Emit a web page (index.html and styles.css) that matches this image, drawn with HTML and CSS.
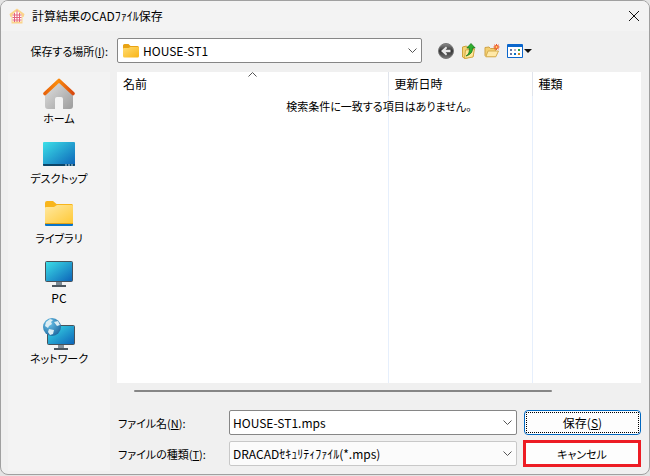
FILE: index.html
```html
<!DOCTYPE html>
<html lang="ja">
<head>
  <meta charset="UTF-8">
  <meta name="viewport" content="width=device-width, initial-scale=1.0">
  <title>計算結果のCADﾌｧｲﾙ保存</title>
  <link rel="stylesheet" href="styles.css">
</head>
<body>
  <svg width="0" height="0" class="defs" aria-hidden="true">
    <defs>
      <linearGradient id="folder" x1="0" y1="0" x2="1" y2="1"><stop offset="0" stop-color="#ffe9a2"/><stop offset="1" stop-color="#ffc937"/></linearGradient>
      <linearGradient id="folderGold" x1="0" y1="0" x2="1" y2="1"><stop offset="0" stop-color="#ffdc72"/><stop offset="1" stop-color="#f9b415"/></linearGradient>
      <linearGradient id="screen" x1="0" y1="0" x2="1" y2="1"><stop offset="0" stop-color="#3ce0e8"/><stop offset="1" stop-color="#0c62b8"/></linearGradient>
      <linearGradient id="wall" x1="0" y1="0" x2="1" y2="1"><stop offset="0" stop-color="#e4e4e4"/><stop offset="1" stop-color="#9c9c9c"/></linearGradient>
      <linearGradient id="roof" x1="0" y1="0" x2="1" y2="0"><stop offset="0" stop-color="#e8640c"/><stop offset="0.45" stop-color="#fb8c0c"/><stop offset="1" stop-color="#d84a10"/></linearGradient>
      <radialGradient id="globe" cx="0.35" cy="0.3" r="0.8"><stop offset="0" stop-color="#6cc4ea"/><stop offset="1" stop-color="#1b649c"/></radialGradient>
      <linearGradient id="ball" x1="0" y1="0" x2="0" y2="1"><stop offset="0" stop-color="#8c8c8c"/><stop offset="0.5" stop-color="#333"/><stop offset="1" stop-color="#777"/></linearGradient>
    </defs>
  </svg>

  <div class="dialog">
    <header class="titlebar">
      <svg class="app-icon" width="16" height="16" viewBox="0 0 16 16">
        <path d="M8 0.5 L15.5 6 L14.6 9 L13.5 8.8 V15.5 H2.5 V8.8 L1.4 9 L0.5 6 Z" fill="#fbd48c"/>
        <path d="M8 3 L12.5 6.5 V13.5 H3.5 V6.5 Z" fill="#fff"/>
        <path d="M8 2.5 V14 M5.5 5 V14 M10.5 5 V14 M3.5 7 H12.5 M3.5 9.5 H12.5 M3.5 12 H12.5" stroke="#e4647c" fill="none"/>
      </svg>
      <h1>計算結果のCADﾌｧｲﾙ保存</h1>
      <button class="close" type="button" aria-label="閉じる">
        <svg width="10" height="10" viewBox="0 0 10 10"><path d="M0 0 L10 10 M10 0 L0 10" stroke="#111" fill="none"/></svg>
      </button>
    </header>

    <form class="content">
      <div class="location">
        <label for="folder-select">保存する場所(<u>I</u>):</label>
        <div class="combo combo-folder">
          <svg width="16" height="14" viewBox="0 0 16 14">
            <path d="M0 1.5 Q0 0 1.5 0 H5.5 L7.5 2 H14.5 Q16 2 16 3.5 V6 H0 Z" fill="#e9a313"/>
            <path d="M0 5 Q0 4 1 4 H5.5 L7.5 3 H15 Q16 3 16 4 V12 Q16 13.5 14.5 13.5 H1.5 Q0 13.5 0 12 Z" fill="url(#folderGold)"/>
          </svg>
          <select id="folder-select"><option>HOUSE-ST1</option></select>
          <svg class="chevron" width="9" height="6" viewBox="0 0 9 6"><path d="M0.5 0.5 L4.5 4.5 L8.5 0.5" stroke="#555" fill="none"/></svg>
        </div>
        <div class="tools">
          <button type="button" aria-label="戻る">
            <svg width="16" height="16" viewBox="0 0 16 16">
              <circle cx="8" cy="8" r="7.5" fill="url(#ball)" stroke="#777"/>
              <path d="M3 8 L8 3.5 L9.2 5 L7.6 6.8 H12.5 V9.2 H7.6 L9.2 11 L8 12.5 Z" fill="#e8e8e8"/>
            </svg>
          </button>
          <button type="button" aria-label="上へ">
            <svg width="16" height="16" viewBox="0 0 16 16">
              <path d="M1.5 4 L5.5 3 L7 4.5 L12.5 4 V13 L4 15.5 L1.5 14 Z" fill="#f5d375" stroke="#cfa23c"/>
              <path d="M4.5 7 L13.5 6 L12 14 L3.5 15.5 Z" fill="#ffe79a" stroke="#d2a843"/>
              <path d="M5 13 Q9 11 8.3 5 H5.8 L10 0.5 L14.2 5 H11.5 Q12 11 5 13 Z" fill="#2fb02f" stroke="#127018" stroke-width="0.7"/>
            </svg>
          </button>
          <button type="button" aria-label="新しいフォルダー">
            <svg width="16" height="16" viewBox="0 0 16 16">
              <path d="M1 4.5 L5 4 L6.5 5.5 H11.5 V13.5 H2 L1 12.5 Z" fill="#f3cf70" stroke="#d0a345"/>
              <path d="M4 8 H14.5 L11.8 13.8 H1.8 Z" fill="#ffe9a8" stroke="#d6ad4e"/>
              <path d="M12.5 1 V7 M9.5 4 H15.5 M10.2 1.8 L14.8 6.2 M14.8 1.8 L10.2 6.2" stroke="#ee5528" fill="none"/>
              <circle cx="12.5" cy="4" r="1.6" fill="#ffd26a" stroke="#ee5528"/>
            </svg>
          </button>
          <button type="button" aria-label="表示">
            <svg width="25" height="14" viewBox="0 0 25 14">
              <rect width="16" height="14" rx="1" fill="#0a66cc"/>
              <rect x="1" y="3" width="14" height="10" fill="#fff"/>
              <path d="M3 5h2v2h-2z M3 9h2v2h-2z" fill="#6078a8"/>
              <path d="M7 5h2v2h-2z" fill="#b8a8c0"/><path d="M7 9h2v2h-2z" fill="#0870c8"/>
              <path d="M11 5h2v2h-2z" fill="#28a048"/><path d="M11 9h2v2h-2z" fill="#c88828"/>
              <path d="M17 5 H25 L21 9 Z" fill="#111"/>
            </svg>
          </button>
        </div>
      </div>

      <nav class="places">
        <a href="#home">
          <svg width="32" height="32" viewBox="0 0 32 32">
            <path d="M2 14 L16 2 L30 14 V28 Q30 31 27 31 H20 V21 Q20 19 18 19 H14 Q12 19 12 21 V31 H5 Q2 31 2 28 Z" fill="url(#wall)"/>
            <path d="M2 15.5 L16 2.5 L30 15.5" stroke="url(#roof)" stroke-width="3.6" stroke-linecap="round" stroke-linejoin="round" fill="none"/>
          </svg>
          ホーム
        </a>
        <a href="#desktop">
          <svg width="32" height="32" viewBox="0 0 32 32">
            <rect y="4" width="32" height="24" rx="1" fill="url(#screen)"/>
            <path d="M0 26 H32 V27 Q32 28 31 28 H1 Q0 28 0 27 Z" fill="#0b4568"/>
            <path d="M22 27 h2 M25 27 h2 M28 27 h2" stroke="#c8e4ef"/>
          </svg>
          デスクトップ
        </a>
        <a href="#libraries">
          <svg width="32" height="32" viewBox="0 0 32 32">
            <path d="M2 5 Q2 3 4 3 H10 L13.5 6 H29 L30 7 V12 H2 Z" fill="#f8b51b"/>
            <rect x="2" y="23" width="28" height="5" rx="1" fill="#0874c8"/>
            <path d="M2 10 Q2 9 3 9 H11 L14 7 H29 Q30 7 30 8 V25 H2 Z" fill="url(#folder)"/>
            <path d="M2 25.5 H30" stroke="#e0a118"/>
          </svg>
          ライブラリ
        </a>
        <a href="#pc">
          <svg width="32" height="32" viewBox="0 0 32 32">
            <path d="M13 22 H19 V27 H23 V29 H9 V27 H13 Z" fill="#7c8a94"/>
            <path d="M9 27 H23 V29 H9 Z" fill="#4b565f"/>
            <rect x="2.5" y="3.5" width="27" height="20" rx="1" fill="url(#screen)" stroke="#48525a"/>
          </svg>
          <span>PC</span>
        </a>
        <a href="#network">
          <svg width="32" height="32" viewBox="0 0 32 32">
            <path d="M15 26 H21 V32 H15 Z" fill="#84919b"/>
            <path d="M11 30 H25 V32 H11 Z" fill="#4b565f"/>
            <rect x="4.5" y="7.5" width="27" height="19" rx="1" fill="url(#screen)" stroke="#48525a"/>
            <circle cx="9" cy="9" r="9" fill="url(#globe)"/>
            <path d="M3 4 L7 1 L10 2 L8 4 L9 6 L6 8 L5 10 L2 8 Z M11 4 L15 3 L17 7 L14 8 Z M6 11 L11 12 L10 16 L7 17 L5 14 Z" fill="#dcedf3"/>
          </svg>
          ネットワーク
        </a>
      </nav>

      <main class="files">
        <div class="list">
          <table>
            <colgroup><col class="col-name"><col class="col-date"><col></colgroup>
            <thead>
              <tr>
                <th scope="col">名前
                  <svg class="sort" width="9" height="5" viewBox="0 0 9 5"><path d="M0.5 4.5 L4.5 0.5 L8.5 4.5" stroke="#555" fill="none"/></svg>
                </th>
                <th scope="col">更新日時</th>
                <th scope="col">種類</th>
              </tr>
            </thead>
            <tbody><tr><td></td><td></td><td></td></tr></tbody>
          </table>
          <p class="empty">検索条件に一致する項目はありません。</p>
        </div>
        <div class="scroll"><div class="thumb"></div></div>

        <div class="fields">
          <label for="file-name">ファイル名(<u>N</u>):</label>
          <div class="combo">
            <input id="file-name" type="text" value="HOUSE-ST1.mps">
            <svg class="chevron" width="9" height="6" viewBox="0 0 9 6"><path d="M0.5 0.5 L4.5 4.5 L8.5 0.5" stroke="#555" fill="none"/></svg>
          </div>
          <button class="save" type="submit"><span>保存(<u>S</u>)</span></button>

          <label for="file-type">ファイルの種類(<u>T</u>):</label>
          <div class="combo combo-type">
            <select id="file-type"><option>DRACADｾｷｭﾘﾃｨﾌｧｲﾙ(*.mps)</option></select>
            <svg class="chevron" width="9" height="6" viewBox="0 0 9 6"><path d="M0.5 0.5 L4.5 4.5 L8.5 0.5" stroke="#555" fill="none"/></svg>
          </div>
          <button class="cancel" type="button">キャンセル</button>
        </div>
      </main>
    </form>
  </div>
</body>
</html>
```

FILE: styles.css
```css
* { margin: 0; padding: 0; box-sizing: border-box; }
body { display: flex; flex-direction: column; min-height: 100vh; padding-bottom: 1px; background: #e4e4e4; color: #000; font: 12px/16px "Noto Sans CJK JP", sans-serif; font-feature-settings: "palt"; }
button, input, select { font: inherit; font-feature-settings: inherit; color: inherit; border: 0; background: none; outline: none; }
svg { display: block; flex: none; }
.defs { position: absolute; }

.dialog { flex: 1; display: flex; flex-direction: column; border: 1px solid #a0a0a0; border-radius: 8px; background: #f0f0f0; overflow: hidden; }

.titlebar { display: flex; align-items: center; height: 30px; padding: 0 9px 0 8px; background: #f3f3f3; }
.titlebar h1 { flex: 1; margin-left: 7px; font-size: 12px; font-weight: 400; }
.close { padding: 1px; }

.content { flex: 1; display: grid; grid-template-columns: 102px 1fr; grid-template-rows: auto 1fr; column-gap: 7px; padding: 7px 8px 3px 7px; }

.location { grid-column: 1 / 3; display: flex; align-items: center; margin-bottom: 9px; }
.location label { width: 109px; padding-right: 9px; text-align: right; }
.combo { display: flex; align-items: center; height: 25px; padding: 0 4px 0 3px; background: #fff; border: 1px solid #868686; border-radius: 2px; }
.combo select, .combo input { flex: 1; min-width: 0; appearance: none; }
.combo-folder { flex: 0 1 305px; gap: 4px; padding-left: 5px; }
.combo-type { background: #fbfbfb; border-color: #c8c8c8; }
.tools { display: flex; align-items: center; gap: 7px; margin-left: 16px; }

.places { display: flex; flex-direction: column; gap: 12px; padding-top: 6px; background: #f3f3f3; }
.places a { display: flex; flex-direction: column; align-items: center; color: inherit; text-decoration: none; }
label, .places a, .empty, .cancel { font-size: 11px; }
.places span { font-size: 12px; }

.files { display: flex; flex-direction: column; min-width: 0; }
.list { position: relative; flex: 1; display: flex; background: #fff; }
.list table { flex: 1; width: 100%; border-collapse: collapse; table-layout: fixed; }
.col-name { width: 271px; }
.col-date { width: 144px; }
th { position: relative; height: 24px; padding-left: 6px; text-align: left; font-weight: 400; border-right: 1px solid #e0e4ec; }
td { border-right: 1px solid #e6effc; }
th:last-child, td:last-child { border-right: 0; }
.sort { position: absolute; top: 0; left: 50%; margin-left: -4px; }
.empty { position: absolute; top: 26px; left: 0; right: 0; text-align: center; }

.scroll { padding: 7px 89px 0 17px; }
.thumb { height: 2px; border-radius: 1px; background: #868686; }

.fields { display: grid; grid-template-columns: 112px 1fr 117px; column-gap: 7px; row-gap: 5px; align-items: center; margin-top: 18px; padding-bottom: 4px; }
.fields label { padding-left: 1px; }
.fields .combo { margin-left: -7px; }
.save { height: 25px; padding: 1px; background: #fdfdfd; border: 1px solid #0067c0; border-radius: 4px; }
.save span { display: block; border: 1px dotted #000; line-height: 19px; }
.cancel { height: 27px; margin-left: -1px; background: #fdfdfd; border: 3px solid #ed1c24; }
```
